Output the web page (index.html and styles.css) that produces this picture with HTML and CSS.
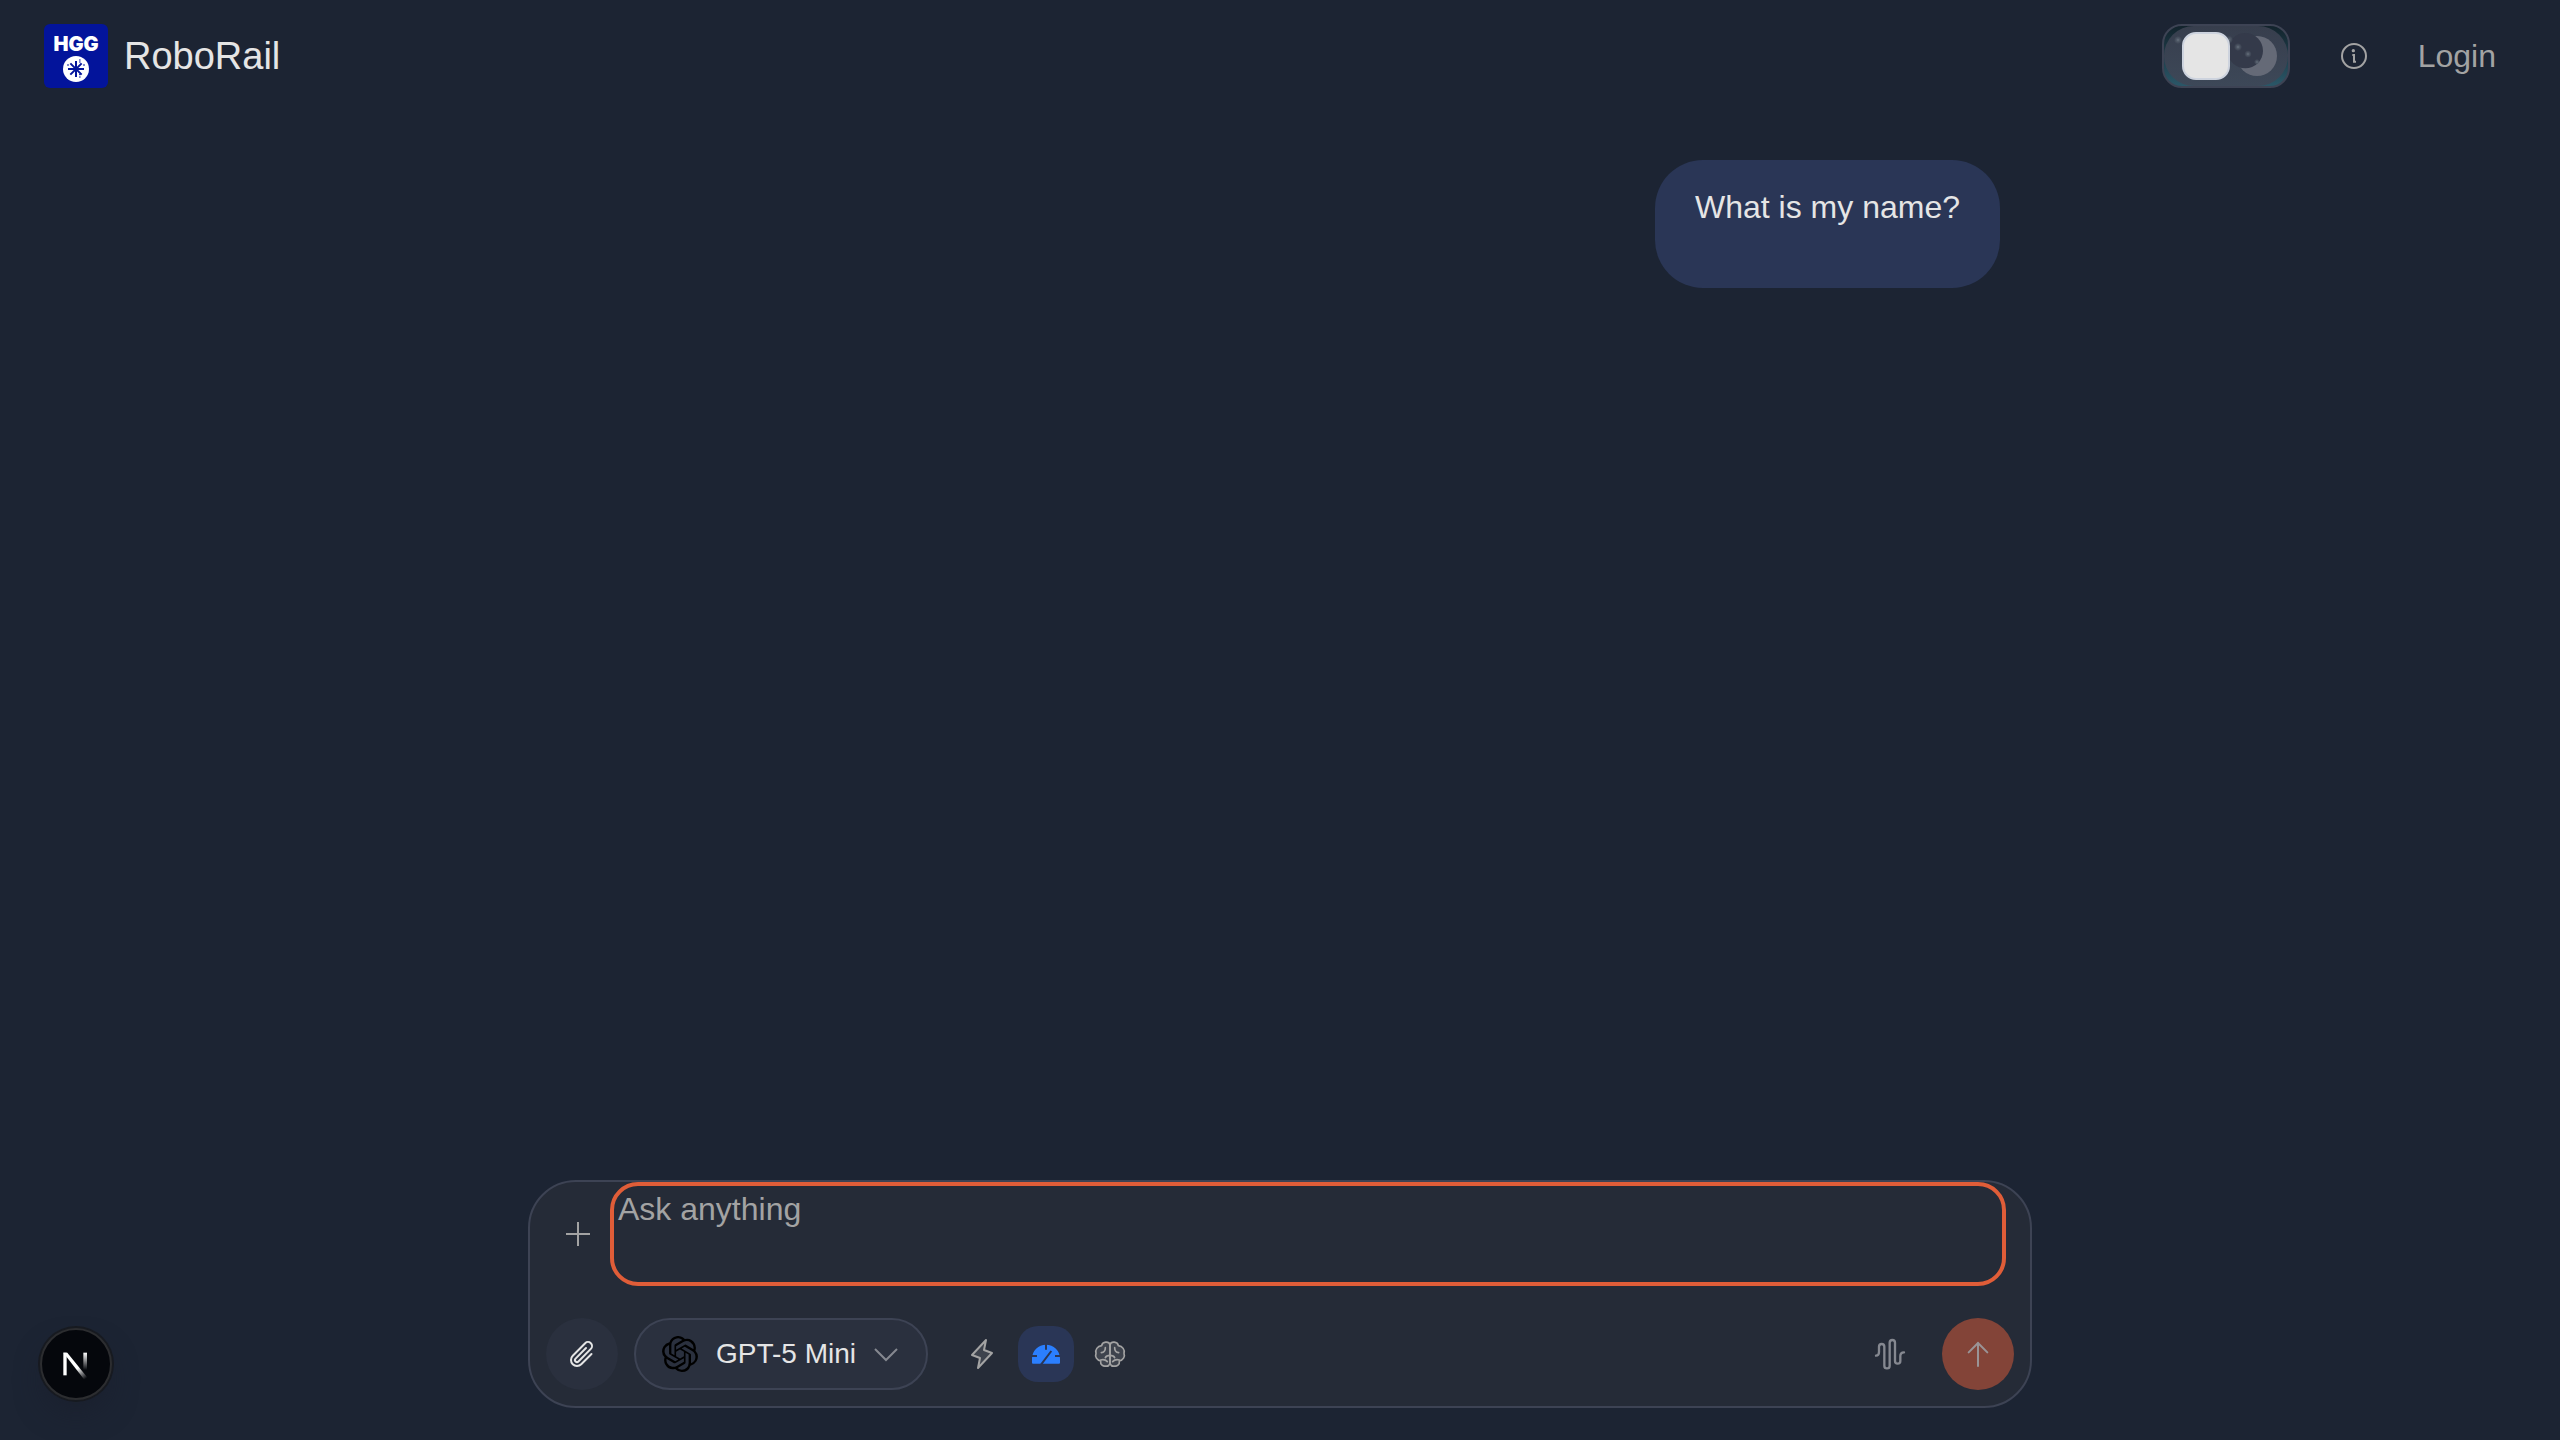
FILE: index.html
```html
<!DOCTYPE html>
<html lang="en">
<head>
<meta charset="utf-8">
<meta name="viewport" content="width=device-width, initial-scale=1">
<title>RoboRail</title>
<link rel="stylesheet" href="styles.css">
</head>
<body>
<header class="header">
  <a class="brand" href="#">
    <span class="logo">
      <span class="logo-text">HGG</span>
      <svg class="logo-mark" viewBox="0 0 78 78" aria-hidden="true">
        <circle cx="39" cy="39" r="39" fill="#fff"/>
        <g stroke="#03149b" stroke-width="6"><path d="M39 15v48M15 39h48M22 22l34 34M56 22L22 56"/></g>
        <g stroke="#03149b" stroke-width="3"><path d="M48 12h5M48 18h5M12 27h6M60 27h6M48 56h5M48 63h5"/></g>
      </svg>
    </span>
    <span class="brand-name">RoboRail</span>
  </a>
  <nav class="nav">
    <label class="theme-toggle">
      <input type="checkbox" role="switch" aria-label="Dark theme" checked>
      <svg viewBox="0 0 384 192" aria-hidden="true">
        <defs>
          <linearGradient id="sky" x1="0" y1="0" x2="0" y2="1"><stop offset="0" stop-color="#12222b"/><stop offset="1" stop-color="#2b5869"/></linearGradient>
          <linearGradient id="haze" x1="0" y1="0" x2="0" y2="1"><stop offset="0" stop-color="#373e4d"/><stop offset="1" stop-color="#3d4858"/></linearGradient>
          <radialGradient id="star"><stop offset="0" stop-color="#6e7886"/><stop offset=".3" stop-color="#59636f" stop-opacity=".8"/><stop offset="1" stop-color="#596370" stop-opacity="0"/></radialGradient>
        </defs>
        <rect x="3" y="3" width="378" height="186" rx="57" fill="url(#sky)"/>
        <rect x="6" y="6" width="372" height="180" rx="90" fill="url(#haze)"/>
        <circle cx="285" cy="96" r="60" fill="#656a77"/>
        <circle cx="250" cy="80" r="53" fill="#343a4a"/>
        <g fill="url(#star)"><circle cx="48" cy="48" r="12"/><circle cx="201" cy="47" r="12"/><circle cx="228" cy="69" r="12"/><circle cx="258" cy="90" r="11"/><circle cx="285" cy="114" r="9"/></g>
        <rect x="3" y="3" width="378" height="186" rx="57" fill="none" stroke="#3d4354" stroke-width="6"/>
        <rect x="63" y="27" width="138" height="138" rx="39" fill="#e5e5e5" stroke="#cdd3de" stroke-width="6"/>
      </svg>
    </label>
    <button class="info" type="button" aria-label="About">
      <svg viewBox="0 0 84 84" aria-hidden="true"><g fill="none" stroke="currentColor" stroke-width="6"><circle cx="42" cy="42" r="36"/><path d="M37 39h5v20h6"/></g><circle cx="40" cy="26" r="5" fill="currentColor"/></svg>
    </button>
    <a class="login" href="#">Login</a>
  </nav>
</header>

<main class="chat">
  <div class="message"><p>What is my name?</p></div>
</main>

<form class="composer">
  <div class="prompt">
    <button class="add" type="button" aria-label="Add">
      <svg viewBox="0 0 24 24" aria-hidden="true"><path d="M12 0v24M0 12h24" stroke="currentColor" stroke-width="2"/></svg>
    </button>
    <textarea class="prompt-input" aria-label="Message" placeholder="Ask anything"></textarea>
  </div>
  <div class="tools">
    <button class="attach" type="button" aria-label="Attach file">
      <svg class="icon" viewBox="0 0 256 256" aria-hidden="true"><path fill="currentColor" d="M209.66,122.34a8,8,0,0,1,0,11.32l-82.05,82a56,56,0,0,1-79.2-79.21L147.67,35.73a40,40,0,1,1,56.61,56.55L105,193A24,24,0,1,1,71,159L154.3,74.38A8,8,0,1,1,165.7,85.6L82.39,170.31a8,8,0,1,0,11.27,11.36L192.93,81A24,24,0,1,0,159,47L59.76,147.68a40,40,0,1,0,56.53,56.62l82.06-82A8,8,0,0,1,209.66,122.34Z"/></svg>
    </button>
    <button class="model" type="button" aria-haspopup="listbox">
      <svg class="model-logo" viewBox="0 0 24 24" aria-hidden="true"><path d="M22.2819 9.8211a5.9847 5.9847 0 0 0-.5157-4.9108 6.0462 6.0462 0 0 0-6.5098-2.9A6.0651 6.0651 0 0 0 4.9807 4.1818a5.9847 5.9847 0 0 0-3.9977 2.9 6.0462 6.0462 0 0 0 .7427 7.0966 5.98 5.98 0 0 0 .511 4.9107 6.051 6.051 0 0 0 6.5146 2.9001A5.9847 5.9847 0 0 0 13.2599 24a6.0557 6.0557 0 0 0 5.7718-4.2058 5.9894 5.9894 0 0 0 3.9977-2.9001 6.0557 6.0557 0 0 0-.7475-7.0729zm-9.022 12.6081a4.4755 4.4755 0 0 1-2.8764-1.0408l.1419-.0804 4.7783-2.7582a.7948.7948 0 0 0 .3927-.6813v-6.7369l2.02 1.1686a.071.071 0 0 1 .038.052v5.5826a4.504 4.504 0 0 1-4.4945 4.4944zm-9.6607-4.1254a4.4708 4.4708 0 0 1-.5346-3.0137l.142.0852 4.783 2.7582a.7712.7712 0 0 0 .7806 0l5.8428-3.3685v2.3324a.0804.0804 0 0 1-.0332.0615L9.74 19.9502a4.4992 4.4992 0 0 1-6.1408-1.6464zM2.3408 7.8956a4.485 4.485 0 0 1 2.3655-1.9728V11.6a.7664.7664 0 0 0 .3879.6765l5.8144 3.3543-2.0201 1.1685a.0757.0757 0 0 1-.071 0l-4.8303-2.7865A4.504 4.504 0 0 1 2.3408 7.872zm16.5963 3.8558L13.1038 8.364 15.1192 7.2a.0757.0757 0 0 1 .071 0l4.8303 2.7913a4.4944 4.4944 0 0 1-.6765 8.1042v-5.6772a.79.79 0 0 0-.407-.667zm2.0107-3.0231l-.142-.0852-4.7735-2.7818a.7759.7759 0 0 0-.7854 0L9.409 9.2297V6.8974a.0662.0662 0 0 1 .0284-.0615l4.8303-2.7866a4.4992 4.4992 0 0 1 6.6802 4.66zM8.3065 12.863l-2.02-1.1638a.0804.0804 0 0 1-.038-.0567V6.0742a4.4992 4.4992 0 0 1 7.3757-3.4537l-.142.0805L8.704 5.459a.7948.7948 0 0 0-.3927.6813zm1.0976-2.3654l2.602-1.4998 2.6069 1.4998v2.9994l-2.5974 1.4997-2.6067-1.4997Z"/></svg>
      <span>GPT-5 Mini</span>
      <svg class="chevron" viewBox="0 0 24 24" aria-hidden="true"><path d="M1 7l11 11L23 7" fill="none" stroke="currentColor" stroke-width="2"/></svg>
    </button>
    <div class="modes">
      <button class="mode" type="button" aria-label="Fast">
        <svg class="icon" viewBox="0 0 256 256" aria-hidden="true"><path d="M96 240l16-80-64-24L160 16l-16 80 64 24Z" fill="currentColor" fill-opacity=".2" stroke="currentColor" stroke-width="16" stroke-linejoin="round"/></svg>
      </button>
      <button class="mode mode-active" type="button" aria-label="Balanced" aria-pressed="true">
        <svg class="icon" viewBox="0 0 96 96" aria-hidden="true"><path d="M6 62a42 42 0 0 1 84 0v12a3 3 0 0 1-3 3H9a3 3 0 0 1-3-3z" fill="currentColor"/><path d="M48 16v19M4 54h17M75 54h17M33 80l31-41" stroke="#2a3656" stroke-width="6"/></svg>
      </button>
      <button class="mode" type="button" aria-label="Deep thinking">
        <svg class="icon" viewBox="0 0 96 96" aria-hidden="true"><g fill="none" stroke="currentColor" stroke-width="5" stroke-linecap="round" stroke-linejoin="round">
          <path fill="currentColor" fill-opacity=".2" d="M48 20C45 9 25 10 23 23C10 25 3 35 6 46C2 56 9 67 20 69C18 80 28 86 35 84C42 86 48 82 48 72Z"/>
          <path fill="currentColor" fill-opacity=".2" d="M48 20C51 9 71 10 73 23C86 25 93 35 90 46C94 56 87 67 76 69C78 80 68 86 61 84C54 86 48 82 48 72Z"/>
          <path d="M34 29C34 39 30 43 22 44M62 29C62 39 66 43 74 44M48 52C41 52 36 54 34 59M48 52C55 52 60 54 62 59M20 66C28 64 34 64 40 71M76 66C68 64 62 64 56 71"/></g></svg>
      </button>
    </div>
    <button class="voice" type="button" aria-label="Voice input">
      <svg class="icon" viewBox="0 0 96 96" aria-hidden="true"><path d="M6 53C12 53 15 50 15 42V26a8 8 0 0 1 16 0V83a8 8 0 0 0 16 0V14a8 8 0 0 1 16 0V69a8 8 0 0 0 16 0V54C79 46 83 43 90 43" fill="none" stroke="currentColor" stroke-width="7" stroke-linecap="round"/></svg>
    </button>
    <button class="send" type="submit" aria-label="Send">
      <svg class="icon" viewBox="0 0 96 96" aria-hidden="true"><path d="M48 84V14M20 43L48 15L76 43" fill="none" stroke="currentColor" stroke-width="6" stroke-linecap="round" stroke-linejoin="round"/></svg>
    </button>
  </div>
</form>

<button class="dev-badge" type="button" aria-label="Open developer tools">
  <svg viewBox="0 0 84 96" aria-hidden="true">
    <defs>
      <linearGradient id="diag" gradientUnits="userSpaceOnUse" x1="50" y1="58" x2="74" y2="90"><stop offset="0" stop-color="#fff"/><stop offset="1" stop-color="#fff" stop-opacity="0"/></linearGradient>
      <linearGradient id="stem" x1="0" y1="0" x2="0" y2="1"><stop offset="0" stop-color="#fff"/><stop offset="1" stop-color="#fff" stop-opacity="0"/></linearGradient>
    </defs>
    <path fill="#fff" d="M4 14h10v68H4z"/>
    <path fill="url(#diag)" d="M4 14h12L79 92l-9 7z"/>
    <path fill="url(#stem)" d="M64 14h11v52H64z"/>
  </svg>
</button>
</body>
</html>
```
FILE: styles.css
```css
* {
  box-sizing: border-box;
}

body {
  margin: 0;
  min-height: 100vh;
  display: flex;
  flex-direction: column;
  background: #1c2433;
  color: #e5e5e5;
  font-family: "Liberation Sans", Arial, sans-serif;
  font-size: 32px;
  line-height: 40px;
}

button {
  display: flex;
  align-items: center;
  justify-content: center;
  flex-shrink: 0;
  margin: 0;
  padding: 0;
  border: 0;
  background: none;
  color: #a3a3a3;
  font: inherit;
  cursor: pointer;
}

a {
  color: inherit;
  text-decoration: none;
}

svg {
  display: block;
  flex-shrink: 0;
}

.icon {
  width: 32px;
  height: 32px;
}

.header {
  display: flex;
  align-items: center;
  justify-content: space-between;
  padding: 24px 64px 24px 44px;
}

.brand {
  display: flex;
  align-items: center;
  gap: 16px;
}

.logo {
  display: flex;
  flex-direction: column;
  align-items: center;
  gap: 2px;
  width: 64px;
  height: 64px;
  padding-top: 10px;
  border-radius: 6px;
  background: #03149b;
}

.logo-text {
  color: #fff;
  font-family: Inter, sans-serif;
  font-size: 20px;
  font-weight: 900;
  line-height: 20px;
}

.logo-mark {
  width: 26px;
  height: 26px;
}

.brand-name {
  font-size: 38px;
}

.nav {
  display: flex;
  align-items: center;
}

.theme-toggle {
  position: relative;
  width: 128px;
  height: 64px;
  margin-right: 50px;
}

.theme-toggle input {
  position: absolute;
  inset: 0;
  width: 100%;
  height: 100%;
  margin: 0;
  opacity: 0;
}

.info {
  margin-right: 50px;
}

.info svg {
  width: 28px;
  height: 28px;
}

.login {
  color: #a3a3a3;
}

.chat {
  flex: 1;
  display: flex;
  flex-direction: column;
  align-items: flex-end;
  width: 100%;
  max-width: 1504px;
  margin: 0 auto;
  padding: 48px 32px;
}

.message {
  padding: 20px 40px 54px;
  border-radius: 48px;
  background: #2a3656;
}

.message p {
  margin: 0;
  line-height: 54px;
}

.composer {
  width: 100%;
  max-width: 1504px;
  margin: 0 auto 32px;
  border: 2px solid #3d4354;
  border-radius: 48px;
  background: #252b37;
}

.prompt {
  display: flex;
  padding-right: 24px;
}

.add {
  width: 80px;
  padding-left: 16px;
}

.add svg {
  width: 24px;
  height: 24px;
}

.prompt-input {
  flex: 1;
  height: 104px;
  padding: 4px;
  border: 4px solid #e05d38;
  border-radius: 28px;
  outline: none;
  resize: none;
  overflow: hidden;
  background: transparent;
  color: inherit;
  font: inherit;
  line-height: 38px;
}

.prompt-input::placeholder {
  color: #a3a3a3;
  opacity: 1;
}

.tools {
  display: flex;
  align-items: center;
  padding: 32px 16px 16px;
}

.attach {
  width: 72px;
  height: 72px;
  margin-right: 16px;
  border-radius: 50%;
  background: #2a303e;
  color: #e5e5e5;
}

.model {
  height: 72px;
  padding: 0 28px 0 26px;
  gap: 18px;
  border: 2px solid #3d4354;
  border-radius: 36px;
  background: #2a303e;
  color: #e5e5e5;
  font-size: 28px;
}

.model-logo {
  width: 36px;
  height: 36px;
}

.chevron {
  width: 24px;
  height: 24px;
  color: #858890;
}

.modes {
  display: flex;
  gap: 8px;
  margin-left: 26px;
}

.mode {
  width: 56px;
  height: 56px;
  border-radius: 20px;
}

.mode-active {
  background: #2a3656;
  color: #2b7fff;
}

.voice {
  width: 72px;
  height: 72px;
  margin-left: auto;
  margin-right: 16px;
  color: #858890;
}

.send {
  width: 72px;
  height: 72px;
  border-radius: 50%;
  background: #834438;
  color: #9a9496;
}

.send .icon {
  width: 32px;
  height: 32px;
}

.dev-badge {
  position: fixed;
  left: 40px;
  bottom: 40px;
  width: 72px;
  height: 72px;
  border: 2px solid #2c2d30;
  border-radius: 50%;
  background: #05070c;
  box-shadow: 0 0 0 2px #171a20, 0 16px 32px -8px #1a1f2d;
}

.dev-badge svg {
  width: 28px;
  height: 32px;
}
```
